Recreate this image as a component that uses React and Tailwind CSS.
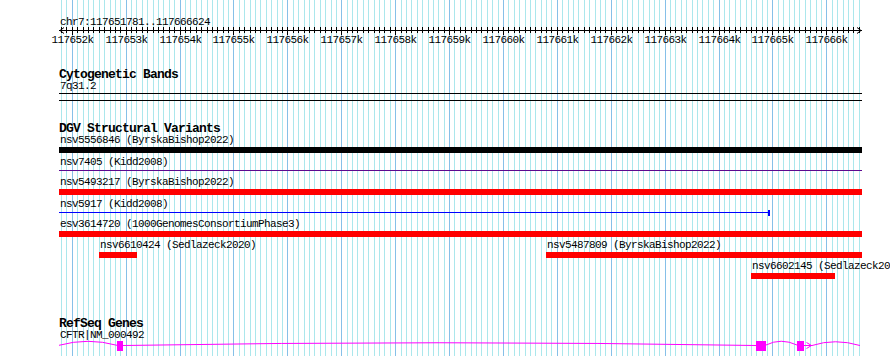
import React from "react";

const START = 117651781;
const END = 117666624;
const TRACK_LEFT = 59;
const TRACK_W = 803;

// genome position -> page x
const bpToX = (bp) => 60 + ((bp - START) * 800) / (END - START);

const gridPositions = [];
for (let p = 117651800; p <= 117666600; p += 100) {
  gridPositions.push({ p, x: Math.round(bpToX(p)), major: p % 1000 === 0 });
}

const kLabels = [];
for (let k = 117652; k <= 117666; k++) kLabels.push(k);

function GridLines() {
  return (
    <svg className="pointer-events-none absolute left-0 top-0" width="890" height="356">
      {gridPositions.map((g) => (
        <rect key={g.p} x={g.x} y="0" width="1" height="356" fill={g.major ? "#86c0e8" : "#abe7ec"} />
      ))}
    </svg>
  );
}

function Ruler() {
  return (
    <svg width={TRACK_W} height="8" className="block">
      <line x1="0" y1="3.5" x2={TRACK_W} y2="3.5" stroke="#000" strokeWidth="1" />
      <polyline points="5,0.5 1,3.5 5,6.5" fill="none" stroke="#000" strokeWidth="1" />
      <polyline points={`${TRACK_W - 5},0.5 ${TRACK_W - 1},3.5 ${TRACK_W - 5},6.5`} fill="none" stroke="#000" strokeWidth="1" />
      {gridPositions.map((g) => (
        <rect key={g.p} x={g.x - TRACK_LEFT} y="0" width="1" height={g.major ? 8 : 6} fill="#000" />
      ))}
    </svg>
  );
}

function RulerLabels() {
  return (
    <div className="relative h-[11px] text-[11px] leading-[11px] tracking-[-0.6px]">
      {kLabels.map((k) => (
        <span
          key={k}
          className="absolute top-0 -translate-x-1/2 whitespace-nowrap"
          style={{ left: Math.round(bpToX(k * 1000)) - TRACK_LEFT + 0.5 }}
        >
          {k}k
        </span>
      ))}
    </div>
  );
}

function TrackTitle({ children, className = "" }) {
  return (
    <div className={"whitespace-nowrap text-[13px] font-bold leading-[13px] tracking-[-0.8px] " + className}>
      {children}
    </div>
  );
}

function Label({ children, className = "" }) {
  return (
    <div className={"whitespace-nowrap pl-[1px] text-[11px] leading-[10px] tracking-[-0.6px] " + className}>
      {children}
    </div>
  );
}

function Feature({ label, className }) {
  return (
    <div className={"shrink-0 " + className}>
      <Label className="pl-0">{label}</Label>
      <div className="mt-[2px] h-[6px] bg-[#ff0000]" />
    </div>
  );
}

function GeneModel() {
  const s = "#ff00ff";
  return (
    <svg width={TRACK_W} height="12" className="block overflow-visible">
      <path d="M0,5.3 Q29,-2.7 58,5.3" fill="none" stroke={s} strokeWidth="1" />
      <rect x="58" y="1" width="6" height="10" fill={s} />
      <path d="M64,5.5 Q381,0 697,5.5" fill="none" stroke={s} strokeWidth="1" />
      <rect x="697" y="1" width="10" height="10" fill={s} />
      <path d="M707,5 Q722,-2.5 738,5" fill="none" stroke={s} strokeWidth="1" />
      <rect x="738" y="1" width="7" height="10" fill={s} />
      <line x1="745" y1="5.5" x2="753" y2="5.5" stroke={s} strokeWidth="1" />
      <polyline points="747.5,2.5 752.5,5.5 747.5,8.5" fill="none" stroke={s} strokeWidth="1" />
      <path d="M753,5.5 Q776,-2 801,5.5" fill="none" stroke={s} strokeWidth="1" />
    </svg>
  );
}

export default function App() {
  return (
    <div className="relative h-[356px] w-[890px] overflow-hidden bg-white font-['Liberation_Mono',monospace] text-black">
      <GridLines />
      <div className="relative pl-[59px]">
        <div className="w-[803px]">
          {/* location + ruler */}
          <Label className="pt-[17px]">chr7:117651781..117666624</Label>
          <Ruler />
          <RulerLabels />

          {/* cytogenetic bands */}
          <TrackTitle className="mt-[22px]">Cytogenetic Bands</TrackTitle>
          <Label>7q31.2</Label>
          <div className="mt-[2px] h-px bg-black" />
          <div className="mt-[6px] h-px bg-black" />

          {/* DGV */}
          <TrackTitle className="mt-[21px]">DGV Structural Variants</TrackTitle>
          <Label>nsv5556846 (ByrskaBishop2022)</Label>
          <div className="mt-[2px] h-[6px] bg-black" />
          <Label className="mt-[4px]">nsv7405 (Kidd2008)</Label>
          <div className="mt-[3px] h-px bg-[#5c0a90]" />
          <Label className="mt-[6px]">nsv5493217 (ByrskaBishop2022)</Label>
          <div className="mt-[2px] h-[6px] bg-[#ff0000]" />
          <Label className="mt-[4px]">nsv5917 (Kidd2008)</Label>
          <svg width={TRACK_W} height="7" className="block">
            <line x1="0" y1="3.5" x2="710" y2="3.5" stroke="#0000ff" strokeWidth="1" />
            <rect x="709" y="1" width="2" height="6" fill="#0000ff" />
          </svg>
          <Label className="mt-[3px]">esv3614720 (1000GenomesConsortiumPhase3)</Label>
          <div className="mt-[2px] h-[6px] bg-[#ff0000]" />

          <div className="mt-[3px] flex">
            <Feature label="nsv6610424 (Sedlazeck2020)" className="ml-[40px] w-[38px]" />
            <Feature label="nsv5487809 (ByrskaBishop2022)" className="ml-[409px] w-[316px]" />
          </div>
          <div className="mt-[3px] flex">
            <Feature label="nsv6602145 (Sedlazeck2020)" className="ml-[692px] w-[84px]" />
          </div>

          {/* RefSeq */}
          <TrackTitle className="mt-[38px]">RefSeq Genes</TrackTitle>
          <Label>CFTR|NM_000492</Label>
          <GeneModel />
        </div>
      </div>
    </div>
  );
}
